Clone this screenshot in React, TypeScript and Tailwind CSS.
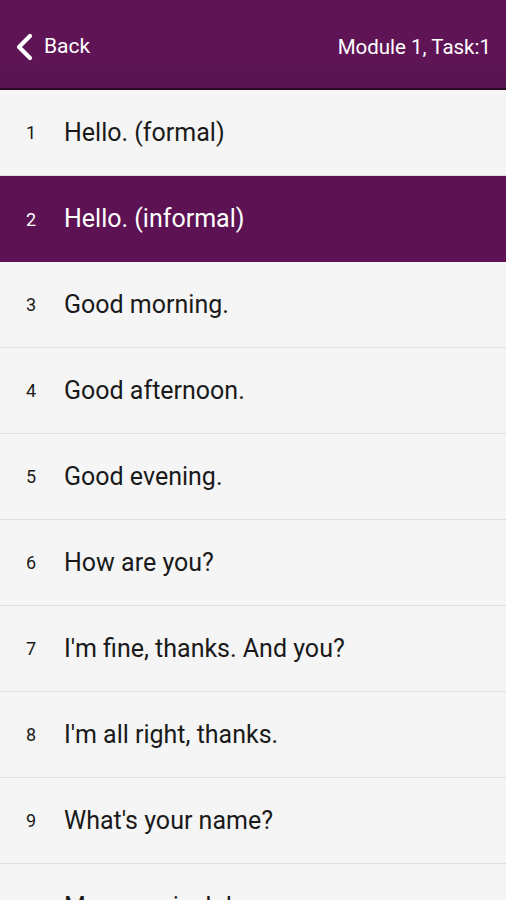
const phrases = [
  "Hello. (formal)",
  "Hello. (informal)",
  "Good morning.",
  "Good afternoon.",
  "Good evening.",
  "How are you?",
  "I'm fine, thanks. And you?",
  "I'm all right, thanks.",
  "What's your name?",
  "My name is John.",
];

export default function App() {
  const selected = 2;
  return (
    <div className="flex h-[900px] w-[506px] flex-col overflow-hidden bg-[#f5f5f5] font-['Roboto',sans-serif]">
      <header className="flex h-[90px] shrink-0 items-center justify-between border-b-2 border-[#2a0a26] bg-gradient-to-b from-[#5f1555] from-70% to-[#561350] pl-[14px] pr-[15px] pt-[6px]">
        <button className="flex items-center gap-[10px] text-[21px] text-white">
          <svg width="20" height="28" viewBox="0 0 20 28" fill="none">
            <polyline points="16,3 5,14 16,25" stroke="white" strokeWidth="4.2" strokeLinecap="round" strokeLinejoin="round" />
          </svg>
          <span>Back</span>
        </button>
        <span className="text-[20.5px] text-white">Module 1, Task:1</span>
      </header>

      <ul className="flex flex-col">
        {phrases.map((text, i) => {
          const n = i + 1;
          const active = n === selected;
          return (
            <li
              key={n}
              className={
                active
                  ? "flex h-[86px] shrink-0 items-center bg-[#5d1353] text-white"
                  : "flex h-[86px] shrink-0 items-center border-b border-[#dedede] text-[#1a1a1a]"
              }
            >
              <span className="w-[64px] pl-[26px] text-[18px]">{n}</span>
              <span className="text-[25px]">{text}</span>
            </li>
          );
        })}
      </ul>
    </div>
  );
}
